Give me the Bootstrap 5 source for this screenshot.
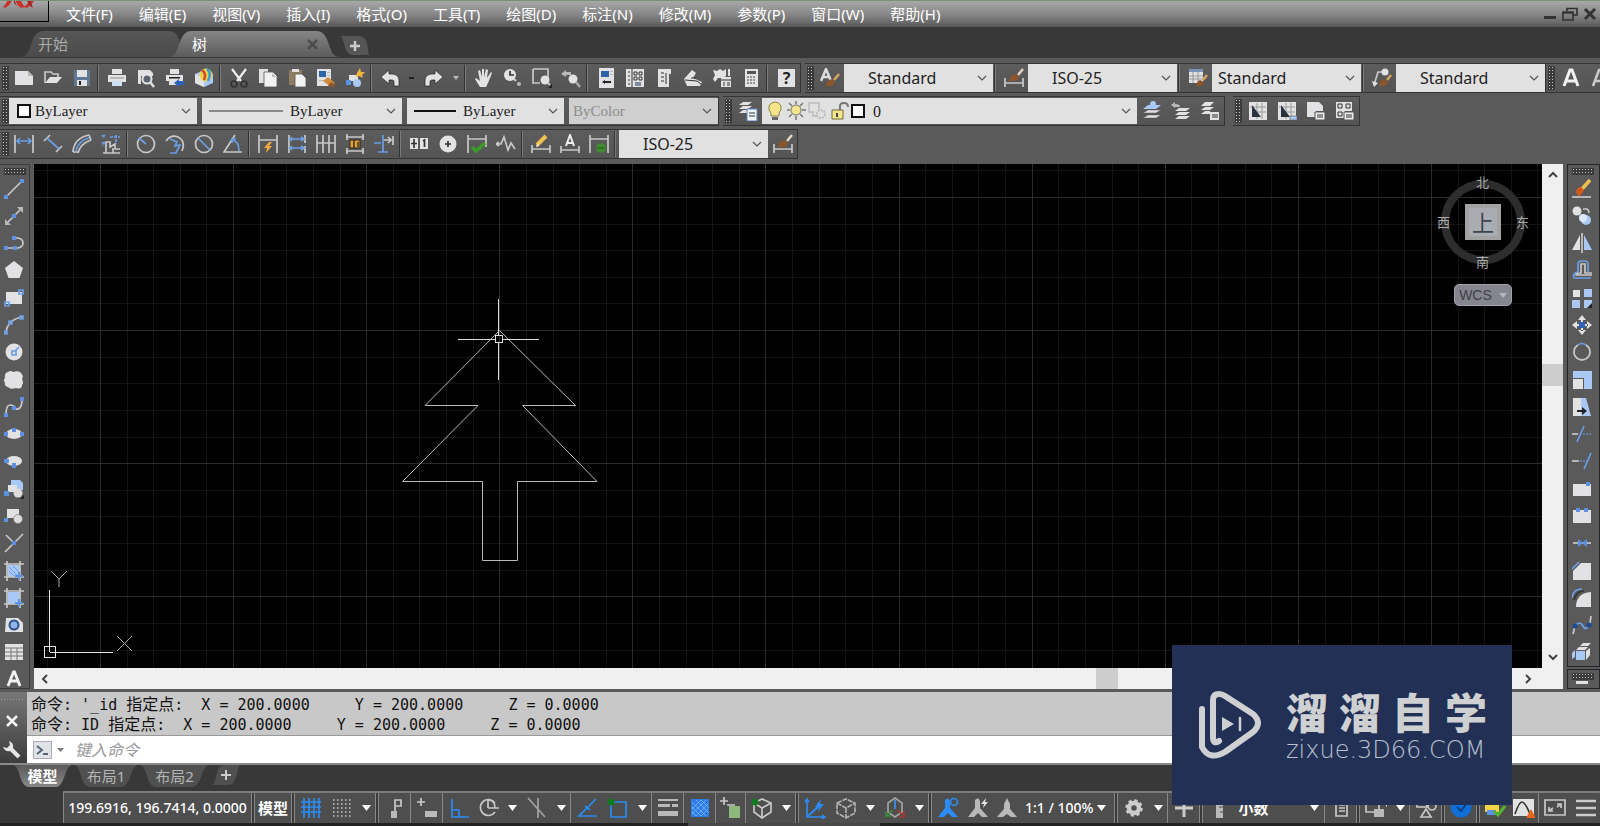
<!DOCTYPE html>
<html lang="zh-CN">
<head>
<meta charset="utf-8">
<meta name="viewport" content="width=device-width, initial-scale=1">
<title>树</title>
<link href="https://cdn.jsdelivr.net/npm/bootstrap@5.3.0/dist/css/bootstrap.min.css" rel="stylesheet">
<style>
:root{--ui:"Noto Sans","Noto Sans CJK SC",sans-serif}
body{font-family:var(--ui);font-size:15px;line-height:20px;background:#5a5a5a;color:#eee}
button{border:0;background:none;padding:0;color:inherit;display:flex;align-items:center;justify-content:center;flex:none}
svg{display:block;flex:none}
/* svg paint helpers */
.w{fill:#e2e2e4}.g{fill:#b9b9b9}.k{fill:#222}.f{fill:#a9c8f3}.u{fill:#5b93e2}.o{fill:#eaa02c}.r{fill:#8d5529}
.l,.b,.d,.n{fill:none;stroke:#c8c8c8;stroke-width:1.7}.b{stroke:#6a9fe8}.d{stroke:#333}.n{stroke:#2b8cf5}
.t{stroke-width:1}
.menubar{height:27px;border-top:1px solid #7b8f7b;background:linear-gradient(#a8a8a8,#888 50%,#585858)}
.logo-box{width:49px;height:21px;border-right:1px solid #000;border-bottom:1px solid #000;background:linear-gradient(#a8a8a8,#707070);align-self:flex-start;overflow:hidden}
.menus{gap:26px;padding-left:17px}
.menus a{color:#fff;text-decoration:none;white-space:nowrap}
.win button{width:20px;height:20px}
.filebar{height:31px;background:#383838;padding:4px 0 1px 20px}
.filetab{height:26px;width:162px;padding:0 18px;background:linear-gradient(#565656,#4b4b4b);color:#aaa;clip-path:path("M0 26C14 26 8 0 24 0H148C160 0 160 12 162 26Z")}
.filetab.on{width:172px;margin-left:-14px;padding:0 22px 0 24px;background:linear-gradient(#858585,#5c5c5c);color:#fff;clip-path:path("M0 26C14 26 8 0 24 0H148C164 0 158 26 172 26Z")}
.newtab{width:28px;height:19px;margin:5px 0 0 1px;background:#565656;clip-path:path("M0 0H16C27 0 26 8 28 19H13C3 19 5 9 0 0Z")}
.bars{padding:5px 0;gap:3px}
.bar{height:30px;border:1px solid #343434;border-left:0;background:linear-gradient(#5d5d5d,#545454);flex:none}
.grip{width:7px;height:24px;margin:0 1px 0 2px;background:radial-gradient(circle,#c8c8c8 0 1px,transparent 1px) 0 0/3px 3px,#3a3a3a;flex:none}
.tb{width:29px;height:28px}
.tb svg,.side svg{width:20px;height:20px}
.sep{width:6px;height:26px;border-left:1px solid #333;box-shadow:inset 1px 0 #7c7c7c;margin-left:1px;margin-right:-1px;flex:none}
.dd{width:15px;height:28px}
select{appearance:none;border:0;border-radius:0;color:#222;font-size:16px;height:28px;outline:0;background:#e1e1e1 url("data:image/svg+xml,%3Csvg xmlns='http://www.w3.org/2000/svg' width='10' height='6'%3E%3Cpath d='M1 1l4 4 4-4' fill='none' stroke='%23555' stroke-width='1.2'/%3E%3C/svg%3E") no-repeat right 6px center}
.std{width:149px;padding:0 24px}
.std.near{padding-left:6px}
.prop{display:flex;align-items:center;height:26px;background:#e1e1e1;margin-right:5px}
.prop select{height:26px;flex:1 1 0;min-width:0;font:15px "Liberation Serif",serif;padding:0 4px}
.prop select:disabled{color:#8c8c8c;background-color:#cfcfcf;opacity:1}
.prop .swatch0{margin-left:-7px}
.side{width:30px;border:1px solid #3a3a3a;border-left:0;background:#5a5a5a;padding-top:3px}
.side .grip{width:22px;height:7px;margin:0 0 0 4px}
.sidegrid{display:grid;grid-auto-rows:1fr;flex:1 1 0;justify-items:start}
.sidegrid button,.side>button{width:27px}
.side .last{height:22px}
.side.right{width:33px}
.side.mini{height:20px;margin-top:2px}
.side.mini svg{width:12px;height:5px}
.drawing{background:#000;overflow:hidden;flex:1 1 0;min-width:0}
.drawing svg.sheet{position:absolute;left:0;top:0;width:100%;height:100%}
.ucs{position:absolute;left:8px;bottom:6px}
.cube{position:absolute;right:13px;top:8px;width:92px;color:#aaa;font-size:13px}
.ring{width:84px;height:84px;border:8px solid #2d2d2d;border-radius:50%;margin:8px auto 0;display:flex;align-items:center;justify-content:center}
.face{width:36px;height:36px;background:#a9acb2;color:#3c4450;font-size:22px;border:4px solid #a2a2a2}
.dir{position:absolute}
.wcs{width:58px;height:22px;border-radius:5px;background:#85858f;color:#3f3f45;border:1px solid #a0a0a8;font:14px "Liberation Sans",sans-serif;margin:20px 0 0 17px;gap:7px}
.track{background:#f0f0f0}
.track button{width:21px;height:21px}
.thumb{background:#cdcdcd}
.v-track .thumb{height:22px}
.h-track .thumb{width:22px}
.cmd{border-top:3px solid #5a5a5a}
.cmdside{width:27px;background:linear-gradient(#777,#3d3d3d);gap:14px;padding:6px 3px 0 0}
.hist{background:#c8c8c8;color:#111;font:15px/19px "DejaVu Sans Mono","Noto Sans CJK SC",monospace;height:44px;padding:3px 4px;margin:0;border-bottom:1px solid #999;overflow:hidden}
.hist span{font-size:16px}
.entry{height:27px;background:#fff;padding-left:6px}
.entry input{border:0;outline:0;font:italic 16px var(--ui);flex:1;min-width:0;padding:0 0 0 11px;color:#333}
.entry input::placeholder{color:#9a9a9a}
.layouts{height:28px;background:#383838;border-top:2px solid #8a8a8a;padding-left:14px}
.lay{height:22px;width:62px;margin-right:4px;background:#505050;color:#b4b4b4;clip-path:path("M0 0H62C55 4 56 21 46 22H15C5 21 7 4 0 0Z")}
.lay.on{width:57px;background:linear-gradient(#5a5a5a,#888);color:#fff;font-weight:700;clip-path:path("M0 0H57C50 4 51 21 42 22H15C5 21 7 4 0 0Z")}
.lay.wide{width:67px;clip-path:path("M0 0H67C60 4 61 21 51 22H15C5 21 7 4 0 0Z")}
.lay.add{width:28px;height:20px;clip-path:path("M0 20C6 18 2 0 13 0H28C24 4 26 19 17 20Z")}
.status{height:32px;background:#383838;padding-left:63px;color:#fff}
.strip{background:#4e4e4e;border-top:2px solid #7c7c7c;height:32px;min-width:0;overflow:hidden}
.strip button{width:31px;height:30px}
.strip button.near{width:29px}
.strip button.model{width:36px}
.strip button.ar{width:18px}
.strip svg{width:22px;height:22px}
.strip .ar svg,.strip .txt svg{width:9px;height:6px}
.strip .v{width:1px;height:30px;background:#888;flex:none}
.strip .vv{width:4px;height:30px;border:solid #888;border-width:0 1px;background:#3a3a3a;flex:none}
.coords{width:188px;flex:none;border-left:1px solid #888;font-size:14px;font-weight:500;white-space:nowrap}
.strip button.txt{width:auto;font-size:14px;font-weight:500;white-space:nowrap}
.units select{width:90px;height:30px;color:#fff;font-size:15px;font-weight:700;padding:0 4px;background:transparent url("data:image/svg+xml,%3Csvg xmlns='http://www.w3.org/2000/svg' width='9' height='6'%3E%3Cpath d='M0 0h9l-4.500 6z' fill='%23fff'/%3E%3C/svg%3E") no-repeat right 5px center}
.floor{height:3px;background:linear-gradient(90deg,#222 0 43%,#484848 43% 55%,#222 55%)}
.brand{position:absolute;right:88px;bottom:21px;width:340px;height:160px;background:#223055;color:#cfd0d2;padding-left:25px;gap:23px}
.brand .cn{font:900 42px/46px "Noto Sans CJK SC",sans-serif;gap:11px}
.brand .en{font:200 24px/26px "DejaVu Sans Light","DejaVu Sans",sans-serif;color:#b9c0cf;margin-top:3px}
</style>
<script src="https://cdn.jsdelivr.net/npm/bootstrap@5.3.0/dist/js/bootstrap.bundle.min.js"></script>
</head>
<body class="vh-100 overflow-hidden position-relative d-flex flex-column">

<header class="menubar d-flex align-items-center">
  <div class="logo-box"><svg width="48" height="20" viewBox="0 0 48 20"><path d="M3 6Q7 3 8-3H13Q11 4 5 7M17-3H21Q21 3 25 6L21 7Q17 4 15-1M24 6Q29 3 30-3H35Q33 4 27 7M36-3" fill="#c8302c"/><path d="M14-2Q17 6 19 7L14 2M26-3Q29 5 33 7L30 0" fill="#9c2220"/></svg></div>
  <nav class="menus d-flex me-auto">
    <a href="#">文件(F)</a><a href="#">编辑(E)</a><a href="#">视图(V)</a><a href="#">插入(I)</a><a href="#">格式(O)</a><a href="#">工具(T)</a><a href="#">绘图(D)</a><a href="#">标注(N)</a><a href="#">修改(M)</a><a href="#">参数(P)</a><a href="#">窗口(W)</a><a href="#">帮助(H)</a>
  </nav>
  <div class="win d-flex">
    <button aria-label="最小化"><svg width="14" height="14"><path d="M1 9h12v3H1z" fill="#333"/></svg></button>
    <button aria-label="还原"><svg width="16" height="14"><path class="d" d="M5 4V1.500H15V8H11M1 5h10v8H1zM1 6h10"/></svg></button>
    <button aria-label="关闭"><svg width="14" height="14"><path d="M2 2l10 10M12 2L2 12" stroke="#333" stroke-width="3"/></svg></button>
  </div>
</header>

<div class="filebar d-flex">
  <div class="filetab d-flex align-items-center">开始</div>
  <div class="filetab on d-flex align-items-center justify-content-between">树<button aria-label="关闭"><svg width="11" height="11"><path d="M1 1l9 9M10 1l-9 9" stroke="#4c4c4c" stroke-width="2.500"/></svg></button></div>
  <button class="newtab" aria-label="新建"><svg width="12" height="12"><path d="M6 1v10M1 6h10" stroke="#ccc" stroke-width="2.500"/></svg></button>
</div>

<div class="bars d-flex flex-column">
  <!-- standard + styles -->
  <div class="d-flex overflow-hidden">
    <div class="bar d-flex align-items-center">
      <div class="grip me-0"></div>
      <button class="tb" aria-label="新建"><svg viewBox="0 0 20 20"><path class="w" d="M1 3h13l5 5v9H1z"/><path class="g" d="M14 3v5h5z"/></svg></button>
      <button class="tb" aria-label="打开"><svg viewBox="0 0 20 20"><path class="l" d="M2 15V4h6l2 2h5v3"/><path class="w" d="M2 15L7 9h12l-5 6z"/></svg></button>
      <button class="tb" aria-label="保存"><svg viewBox="0 0 20 20"><path fill="#5f7894" d="M2 2h16v16H2z"/><path class="w" d="M5 2h10v7H5zM5 12h10v6H5z"/><path class="k" d="M7 13h2v4H7z"/></svg></button>
      <div class="sep"></div>
      <button class="tb" aria-label="打印"><svg viewBox="0 0 20 20"><path class="w" d="M5 1h10v5H5zM1 7h18v7H1z"/><path class="g" d="M3 9h14v2H3z"/><path fill="#cfe0f5" d="M5 13h10v5H5z"/></svg></button>
      <button class="tb" aria-label="打印预览"><svg viewBox="0 0 20 20"><path class="w" d="M2 2h12l3 3v3H5v8H2z"/><circle cx="11" cy="11" r="4.500" fill="#5b6470" stroke="#e5e5e5" stroke-width="2"/><path d="M14 14l4 5" stroke="#ddd" stroke-width="2.500"/></svg></button>
      <button class="tb" aria-label="发布"><svg viewBox="0 0 20 20"><path class="w" d="M5 1h9v5H5zM1 7h17v6H1zM4 13h8v4H4z"/><path class="k" d="M4 9h11v1.500H4z"/><path fill="#2b62b8" d="M9 15l5-4v2h5v4h-5v2z"/></svg></button>
      <button class="tb" aria-label="三维打印"><svg viewBox="0 0 20 20"><path class="f" d="M1 6l9-4 9 4v9l-9 4-9-4z"/><path class="w" d="M1 6l9 4v9l-9-4z"/><circle cx="12" cy="7" r="6.500" fill="#e8d44a"/><path d="M8 2q5 4 2 10" stroke="#d6442c" stroke-width="2.500" fill="none"/><path d="M13 1q5 4 1 12" stroke="#3b9bd8" stroke-width="2.500" fill="none"/></svg></button>
      <div class="sep"></div>
      <button class="tb" aria-label="剪切"><svg viewBox="0 0 20 20"><path d="M3 1l9 12M17 1L8 13" stroke="#eee" stroke-width="2.200"/><circle cx="5" cy="16" r="3" class="d" stroke-width="2.500"/><circle cx="15" cy="16" r="3" class="d" stroke-width="2.500"/></svg></button>
      <button class="tb" aria-label="复制"><svg viewBox="0 0 20 20"><path class="w" d="M1 1h9v14H1z"/><path d="M6 4h9l4 4v11H6z" fill="#f2f2f2" stroke="#555" stroke-width=".8"/><path class="g" d="M14 5v4h4z"/></svg></button>
      <button class="tb" aria-label="粘贴"><svg viewBox="0 0 20 20"><path fill="#8f7d62" d="M2 2h13v15H2z"/><path class="w" d="M5 1h7v3H5z"/><path d="M8 6h7l4 4v9H8z" fill="#f2f2f2" stroke="#555" stroke-width=".8"/></svg></button>
      <button class="tb" aria-label="特性匹配"><svg viewBox="0 0 20 20"><path class="w" d="M1 1h14v17H1z"/><path fill="#2c64ac" d="M3 3h7v6H3z"/><path class="g" d="M11 4h3v1h-3zM11 7h3v1h-3zM3 12h7v1H3z"/><path fill="#d28a3a" d="M7 13l5-4 7 6-4 4z"/><path class="r" d="M12 17l4-3 3 5h-5z"/></svg></button>
      <button class="tb" aria-label="块编辑器"><svg viewBox="0 0 20 20"><path class="w" d="M4 7h9v6H4z"/><path class="u" d="M1 12h5v5H1z"/><circle cx="12" cy="15" r="4" class="f"/><path d="M15 0l1 4 4 0-3 3 1 3-4-2-3 1 1-4z" fill="#f4b43c"/></svg></button>
      <div class="sep"></div>
      <button class="tb" aria-label="放弃"><svg viewBox="0 0 20 20"><path class="w" d="M1 9l8-7v4h4q6 1 6 6v6h-5v-4q0-2-2-2H9v4z" stroke="#222" stroke-width=".7"/></svg></button>
      <button class="dd" aria-label="放弃列表"><svg width="5" height="3"><path class="k" d="M0 0h5v2H0z"/></svg></button>
      <button class="tb" aria-label="重做"><svg viewBox="0 0 20 20"><path class="w" d="M19 9l-8-7v4H7q-6 1-6 6v6h5v-4q0-2 2-2h3v4z" stroke="#222" stroke-width=".7"/></svg></button>
      <button class="dd" aria-label="重做列表"><svg width="6" height="4"><path class="g" d="M0 0h6l-3 4z"/></svg></button>
      <div class="sep"></div>
      <button class="tb" aria-label="平移"><svg viewBox="0 0 20 20"><path class="w" d="M6 19L1 11l1-1 4 3L4 3l2-1 2 7V1h2v8l2-8 2 1-1 8 4-6 1 1-4 10-2 4z"/></svg></button>
      <button class="tb" aria-label="实时缩放"><svg viewBox="0 0 20 20"><circle cx="7" cy="7" r="6" class="w"/><path class="d" d="M7 3v4h4"/><path d="M11 11l3 3" stroke="#ccc" stroke-width="2"/><path d="M13 13l5 5" stroke="#555" stroke-width="3"/><circle cx="16" cy="16" r="2" class="g"/></svg></button>
      <button class="tb" aria-label="窗口缩放"><svg viewBox="0 0 20 20"><path class="l" d="M1 1h15v9M8 15H1V1"/><circle cx="13" cy="12" r="4.500" class="w"/><path d="M16 15l2 2" stroke="#ccc" stroke-width="2"/><path class="k" d="M20 16v4h-4z"/></svg></button>
      <button class="tb" aria-label="缩放上一个"><svg viewBox="0 0 20 20"><path class="g" d="M0 6l5-4v2h5v3H5v2z"/><circle cx="12" cy="11" r="4.500" class="w"/><path d="M15 14l4 5" stroke="#aaa" stroke-width="2.500"/></svg></button>
      <div class="sep"></div>
      <button class="tb" aria-label="特性"><svg viewBox="0 0 20 20"><path class="w" d="M3 0h15v20H3z"/><path fill="#2c64ac" d="M5 3h8v6H5z"/><path class="k" d="M6 14l3-2v1h6v2H9v1z"/><path class="g" d="M14 3h3v1h-3zM14 6h3v1h-3z"/></svg></button>
      <button class="tb" aria-label="设计中心"><svg viewBox="0 0 20 20"><path class="w" d="M1 1h18v18H1z"/><path d="M7 1v18M3 4h2M3 8h2M3 12h2M3 16h2" class="d t"/><path d="M9 4h3v3H9zM14 4h3v3h-3zM9 9h3v3H9zM14 9h3v3h-3z" class="d t"/><path fill="#7d8ca5" d="M10 14h6v4h-6z"/></svg></button>
      <button class="tb" aria-label="工具选项板"><svg viewBox="0 0 20 20"><path class="w" d="M4 1h13v5h-2v13H4z"/><path d="M7 5h3M7 9h3M7 13h3M12 5v11" class="d t"/></svg></button>
      <button class="tb" aria-label="图纸集"><svg viewBox="0 0 20 20"><path class="w" d="M1 11l8-9 4 3-3 5 9 4-2 4H4z"/><path d="M2 12l12 1 4 3M8 10l5 0" class="d t"/></svg></button>
      <button class="tb" aria-label="标记集"><svg viewBox="0 0 20 20"><path class="w" d="M1 2l4 1 3-2 3 2 3-2v7l-3 2H6l-3 4-2-3 2-4z"/><path class="w" d="M16 1h2v7h-2zM9 9h10v10H9z"/><path d="M9 12h10M11 15h2M15 15h3M11 17h2M15 17h3" class="d t"/></svg></button>
      <button class="tb" aria-label="计算器"><svg viewBox="0 0 20 20"><path class="w" d="M4 1h13v18H4z"/><path fill="#555" d="M6 3h9v3H6z"/><path d="M6 9h9M6 12h9M6 15h9" stroke="#777" stroke-width="1.500" stroke-dasharray="2 1"/></svg></button>
      <div class="sep"></div>
      <button class="tb" aria-label="帮助"><svg viewBox="0 0 20 20"><path class="w" d="M2 1h17v18H2z"/><text x="10.500" y="16" text-anchor="middle" font-size="16" font-weight="700" fill="#222">?</text></svg></button>
    </div>
    <div class="bar d-flex align-items-center ms-1">
      <div class="grip"></div>
      <button class="tb" aria-label="文字样式"><svg viewBox="0 0 20 20"><path d="M1 13L6 1l5 12M3 9h6" fill="none" stroke="#ddd" stroke-width="2.500"/><path d="M19 6l-5 6" stroke="#d9a45b" stroke-width="2.500"/><path class="r" d="M6 18q1-5 5-7l4 3q-1 5-9 4z"/></svg></button>
      <select class="std" aria-label="文字样式"><option>Standard</option></select>
      <div class="sep"></div>
      <button class="tb" aria-label="标注样式"><svg viewBox="0 0 20 20"><path class="l" d="M1 10v9M19 10v9M1 15h18"/><path d="M19 1l-5 6" stroke="#e3d6c5" stroke-width="2.500"/><path class="r" d="M5 13q1-5 6-7l4 3q-1 5-10 4z"/></svg></button>
      <select class="std" aria-label="标注样式"><option>ISO-25</option></select>
      <div class="sep"></div>
      <button class="tb" aria-label="表格样式"><svg viewBox="0 0 20 20"><path class="w" d="M1 2h14v13H1z"/><path fill="#7b95b5" d="M1 1h14v3H1z"/><path d="M1 8h14M1 11h14M5 4v11M10 4v11" stroke="#888" stroke-width=".8"/><path d="M19 7l-4 5" stroke="#d9a45b" stroke-width="2.500"/><path class="r" d="M8 18q1-5 4-6l4 2q-1 5-8 4z"/></svg></button>
      <select class="std near" aria-label="表格样式"><option>Standard</option></select>
      <div class="sep"></div>
      <button class="tb" aria-label="多重引线样式"><svg viewBox="0 0 20 20"><path class="l" d="M2 17L6 4h5"/><path class="w" d="M0 13l2 6 4-4z"/><circle cx="13" cy="4" r="3.500" class="w"/><path d="M19 7l-4 5" stroke="#d9a45b" stroke-width="2.500"/><path class="r" d="M7 18q1-6 5-7l4 3q-1 5-9 4z"/></svg></button>
      <select class="std" aria-label="多重引线样式"><option>Standard</option></select>
    </div>
    <div class="bar d-flex align-items-center">
      <div class="grip"></div>
      <button class="tb" aria-label="多行文字"><svg viewBox="0 0 20 20"><path d="M3 18L9 2h2l6 16M6 13h8" fill="none" stroke="#f2f2f2" stroke-width="3"/></svg></button>
      <button class="tb" aria-label="单行文字"><svg viewBox="0 0 20 20"><path d="M3 18L9 2h2l6 16M6 13h8" fill="none" stroke="#ccc" stroke-width="2.500"/></svg></button>
    </div>
  </div>

  <!-- properties + layers -->
  <div class="d-flex">
    <div class="bar d-flex align-items-center">
      <div class="grip me-0"></div>
      <div class="prop" style="width:188px"><svg class="ms-2" width="14" height="14"><path d="M1 1h12v12H1z" fill="#fff" stroke="#111" stroke-width="2"/></svg><select aria-label="颜色"><option>ByLayer</option></select></div>
      <div class="prop" style="width:200px"><svg class="ms-1" width="80" height="4"><path d="M3 2h74" stroke="#333"/></svg><select aria-label="线型"><option>ByLayer</option></select></div>
      <div class="prop" style="width:157px"><svg class="ms-1" width="48" height="4"><path d="M3 2h42" stroke="#111" stroke-width="2"/></svg><select aria-label="线宽"><option>ByLayer</option></select></div>
      <div class="prop me-0" style="width:149px"><select class="std" aria-label="打印样式" disabled><option>ByColor</option></select></div>
    </div>
    <div class="bar d-flex align-items-center ms-1">
      <div class="grip"></div>
      <button class="tb" aria-label="图层特性"><svg viewBox="0 0 20 20"><path class="w" d="M1 4l4-3h9l-4 3zM1 8l4-3h9l-4 3zM1 12l4-3h5v3z"/><path d="M9 8h10v12H9z" fill="#eef3fb" stroke="#5b87c5"/><path d="M11 12h6M11 15h6" class="d t"/></svg></button>
      <div class="prop me-0" style="width:375px">
        <svg class="ms-1" width="92" height="20" viewBox="0 0 92 20"><path d="M5 12Q2 9 3 5Q5 1 9 1t6 4q1 4-2 7v3H5z" fill="#f4e48a" stroke="#8a8148"/><path d="M6 16h6v3H6z" fill="#666"/><circle cx="30" cy="9" r="5" fill="#f4e48a" stroke="#777"/><path d="M30 0v3M30 15v4M21 9h3M36 9h4M23 2l3 3M37 2l-3 3M23 16l3-3M37 16l-3-3" stroke="#777" stroke-width="1.500"/><path d="M51 15h-4V11h-4V2h10v6" fill="none" stroke="#bbb" stroke-width="1.500"/><circle cx="55" cy="13" r="4" fill="none" stroke="#bbb" stroke-width="2" stroke-dasharray="2 1"/><path d="M66 9h11v9H66z" fill="#f4e48a" stroke="#6f6835"/><path d="M74 9V5q0-3 4-3t4 4" fill="none" stroke="#777" stroke-width="2"/><path d="M70 12h2v4h-2z" fill="#444"/></svg>
        <svg class="swatch0" width="14" height="14"><path d="M1 1h12v12H1z" fill="#fff" stroke="#111" stroke-width="2"/></svg>
        <select class="fs-6 ps-2" aria-label="图层"><option>0</option></select>
      </div>
      <button class="tb" aria-label="置为当前"><svg viewBox="0 0 20 20"><path class="w" d="M1 12l5-3h13l-5 3zM1 17l5-3h13l-5 3z" stroke="#555" stroke-width=".5"/><path class="f" d="M1 8l5-4h13l-5 4z"/><circle cx="11" cy="3" r="3" class="f"/></svg></button>
      <button class="tb" aria-label="上一个图层"><svg viewBox="0 0 20 20"><path class="g" d="M0 4l4-3v2q5 0 5 3H4v1z"/><path class="w" d="M4 10l4-3h11l-4 3zM4 14l4-3h11l-4 3zM4 18l4-3h11l-4 3z"/></svg></button>
      <button class="tb" aria-label="图层状态"><svg viewBox="0 0 20 20"><path class="w" d="M1 5l4-4h9l-4 4zM1 9l4-3h9l-4 3zM1 13l4-3h5v3zM10 11h9v8h-9z"/><path d="M12 14h6M12 16h6" class="d t"/></svg></button>
    </div>
    <div class="bar d-flex align-items-center ms-2">
      <div class="grip"></div>
      <button class="tb" aria-label="创建块"><svg viewBox="0 0 20 20"><path class="w" d="M1 1h18v18H1z"/><path d="M9 2v16M14 2v16M2 6h16M9 11h9" stroke="#9a9a9a"/><path d="M4 4l9 12H4z" fill="#2a323e"/></svg></button>
      <button class="tb" aria-label="编辑块"><svg viewBox="0 0 20 20"><path class="w" d="M1 1h18v18H1z"/><path d="M9 2v16M14 2v16M2 6h16M9 11h9" stroke="#9a9a9a"/><path d="M4 4l9 12H4z" fill="#2a323e"/><path d="M13 15h7v4h-7z" class="f" stroke="#555" stroke-width=".6"/></svg></button>
      <button class="tb" aria-label="外部参照"><svg viewBox="0 0 20 20"><path class="w" d="M1 1h12l4 4v5h-7v6H1z"/><path d="M9 11h10v8H9z" fill="#eee" stroke="#555"/><path d="M11 14h6M11 16h6" class="d t"/></svg></button>
      <button class="tb" aria-label="块属性"><svg viewBox="0 0 20 20"><path class="w" d="M1 1h16v9h-7v7H1z"/><path d="M3 3h4v4H3zM11 3h4v4h-4zM3 11h4v4H3z" class="d t"/><path d="M9 11h10v8H9z" fill="#eee" stroke="#555"/><path d="M11 14h6M11 16h6" class="d t"/></svg></button>
    </div>
  </div>

  <!-- dimension -->
  <div class="d-flex">
    <div class="bar d-flex align-items-center">
      <div class="grip me-0"></div>
      <button class="tb" aria-label="线性"><svg viewBox="0 0 20 20"><path class="l" d="M1 1v18M19 1v18"/><path class="b" d="M3 7h14M6 4L3 7l3 3M14 4l3 3-3 3"/></svg></button>
      <button class="tb" aria-label="对齐"><svg viewBox="0 0 20 20"><path class="l" d="M1 7l6-6M13 18l6-6"/><path class="b" d="M4 4l12 11" stroke-width="2.500"/></svg></button>
      <button class="tb" aria-label="弧长"><svg viewBox="0 0 20 20"><path class="l" d="M1 18Q2 4 17 1M6 19Q8 10 19 6M1 18h5M17 1l2 5"/><path class="b" d="M4 17Q6 7 17 4"/></svg></button>
      <button class="tb" aria-label="坐标"><svg viewBox="0 0 20 20"><path class="l" d="M5 19V8h4v5l5-3v5h5M2 19h17M12 14v5"/><path class="b" d="M1 1l3 3M4 1L1 4M9 3h10M15 1v9M1 8l3 3M4 8l-3 4" stroke-dasharray="3 1"/></svg></button>
      <div class="sep"></div>
      <button class="tb" aria-label="半径"><svg viewBox="0 0 20 20"><circle class="l" cx="10" cy="10" r="8.500"/><path class="b" d="M3 4l7 6"/></svg></button>
      <button class="tb" aria-label="折弯"><svg viewBox="0 0 20 20"><path class="l" d="M1 7Q6 0 13 3Q21 7 17 17"/><path class="b" d="M5 5l7 3-2 4 5-1-4 8H5"/></svg></button>
      <button class="tb" aria-label="直径"><svg viewBox="0 0 20 20"><circle class="l" cx="10" cy="10" r="8.500"/><path class="b" d="M4 4l12 12"/></svg></button>
      <button class="tb" aria-label="角度"><svg viewBox="0 0 20 20"><path class="l" d="M12 1L1 18h18"/><path class="b" d="M9 6q7 1 7 11M9 9V5h4"/></svg></button>
      <div class="sep"></div>
      <button class="tb" aria-label="快速标注"><svg viewBox="0 0 20 20"><path class="l" d="M1 1v18M19 1v18M1 6h18"/><path d="M11 8l-5 6h3l-1 5 6-7h-3l3-4z" fill="#f0a93c"/></svg></button>
      <button class="tb" aria-label="基线"><svg viewBox="0 0 20 20"><path class="l" d="M2 1v18M18 1v8M18 12v7"/><path class="b" d="M2 5h15M2 14h15M5 3L3 5l2 2M14 3l3 2-3 2M5 12l-2 2 2 2M14 12l3 2-3 2"/></svg></button>
      <button class="tb" aria-label="连续"><svg viewBox="0 0 20 20"><path class="l" d="M1 1v18M7 1v18M13 1v18M19 1v18M1 9h18"/></svg></button>
      <button class="tb" aria-label="等距标注"><svg viewBox="0 0 20 20"><path class="l" d="M1 3h18M1 17h18M2 0v6M18 0v6M2 14v6M18 14v6"/><path d="M5 6h10v8H5z" fill="#eaa02c" stroke="#222"/><path d="M9 6v8M13 8v5" stroke="#333" stroke-width="1.500"/></svg></button>
      <button class="tb" aria-label="折断标注"><svg viewBox="0 0 20 20"><path class="l" d="M10 6h9M19 2v9M14 3l3 3-3 3"/><path class="b" d="M9 1v17M4 18h10M0 9h7"/></svg></button>
      <div class="sep"></div>
      <button class="tb" aria-label="公差"><svg viewBox="0 0 20 20"><path class="w" d="M1 4h8v11H1zM11 4h8v11h-8z"/><path class="d" d="M5 5v9M2 9.500h6M14 7l1.500-1V13"/></svg></button>
      <button class="tb" aria-label="圆心标记"><svg viewBox="0 0 20 20"><circle cx="10" cy="10" r="8.500" class="w"/><path class="d" d="M10 7v6M7 10h6"/></svg></button>
      <button class="tb" aria-label="检验"><svg viewBox="0 0 20 20"><path class="l" d="M1 1v18M19 1v12M1 5h18"/><path d="M5 13l4 4 9-8" fill="none" stroke="#3c9a28" stroke-width="3.500"/></svg></button>
      <button class="tb" aria-label="折弯线性"><svg viewBox="0 0 20 20"><path class="l" d="M0 10h5l3-7 4 13 3-7 4 6M0 10l3-2M0 10l3 2"/></svg></button>
      <div class="sep"></div>
      <button class="tb" aria-label="编辑标注"><svg viewBox="0 0 20 20"><path class="l" d="M1 11v8M19 11v8M1 15h18"/><path d="M6 11l9-9" stroke="#f2c153" stroke-width="4"/><path d="M5 13l3-1-2-2z" fill="#fff"/></svg></button>
      <button class="tb" aria-label="编辑标注文字"><svg viewBox="0 0 20 20"><path class="l" d="M1 12v7M19 12v7M1 16h18"/><path d="M6 12l4-11 4 11M7 9h6" fill="none" stroke="#eee" stroke-width="2"/></svg></button>
      <button class="tb" aria-label="标注更新"><svg viewBox="0 0 20 20"><path class="l" d="M1 1v18M19 1v18M1 5h18"/><circle cx="12" cy="14" r="5" fill="#3f8a2c"/><path d="M8 14h8" stroke="#2b5d20"/></svg></button>
      <div class="sep"></div>
      <select class="std" aria-label="当前标注样式"><option>ISO-25</option></select>
      <button class="tb" aria-label="标注样式"><svg viewBox="0 0 20 20"><path class="l" d="M1 10v9M19 10v9M1 15h18"/><path d="M19 1l-5 6" stroke="#e3d6c5" stroke-width="2.500"/><path class="r" d="M5 13q1-5 6-7l4 3q-1 5-10 4z"/></svg></button>
    </div>
  </div>
</div>

<main class="d-flex flex-grow-1" style="min-height:0">
  <!-- draw tools -->
  <div class="side d-flex flex-column me-1 overflow-hidden">
    <div class="grip"></div>
    <div class="sidegrid">
      <button aria-label="直线"><svg viewBox="0 0 20 20"><path class="l" d="M2 18L18 2" stroke-width="2.200"/><path class="u" d="M0 16h4v4H0zM16 0h4v4h-4z"/></svg></button>
      <button aria-label="构造线"><svg viewBox="0 0 20 20"><path class="l" d="M2 18L18 2"/><path class="g" d="M1 13v6h6zM13 1h6v6z"/><path class="u" d="M8 8h4v4H8z"/></svg></button>
      <button aria-label="多段线"><svg viewBox="0 0 20 20"><path class="l" d="M2 15h12q5-1 5-5t-5-5h-3" stroke-width="2.500"/><path class="u" d="M0 13h4v4H0zM9 13h4v4H9zM8 3h4v4H8z"/></svg></button>
      <button aria-label="多边形"><svg viewBox="0 0 20 20"><path class="w" d="M10 1l9 7-3.500 10h-11L1 8z"/></svg></button>
      <button aria-label="矩形"><svg viewBox="0 0 20 20"><path class="w" d="M2 4h16v12H2z"/><path class="b" d="M1 14h4v4H1zM15 2h4v4h-4z"/></svg></button>
      <button aria-label="圆弧"><svg viewBox="0 0 20 20"><path class="l" d="M2 18Q3 5 18 2" stroke-width="2.200"/><path class="b" d="M0 16h3v3H0zM5 6h3v3H5zM16 1h3v3h-3z"/></svg></button>
      <button aria-label="圆"><svg viewBox="0 0 20 20"><circle cx="10" cy="10" r="8.500" class="w"/><path class="b" d="M8 9h4v4H8zM11 9l4-4"/></svg></button>
      <button aria-label="修订云线"><svg viewBox="0 0 20 20"><path class="w" d="M4 2q3-2 5 0 6-2 8 1 3 3 1 6 2 4 0 6 0 5-6 3-6 2-8-1-4-1-3-4-2-3 0-5-1-5 3-6z"/></svg></button>
      <button aria-label="样条曲线"><svg viewBox="0 0 20 20"><path class="l" d="M2 18Q2 8 6 8t6 4q6 1 6-10" stroke-width="2.200"/><path class="u" d="M0 16h4v4H0zM8 9h4v4H8zM16 0h4v4h-4z"/></svg></button>
      <button aria-label="椭圆"><svg viewBox="0 0 20 20"><ellipse cx="10" cy="10" rx="8" ry="5" class="w"/><path class="u" d="M0 8h4v4H0zM16 8h4v4h-4zM8 4h4v4H8z"/></svg></button>
      <button aria-label="椭圆弧"><svg viewBox="0 0 20 20"><ellipse cx="10" cy="10" rx="8" ry="5" class="w"/><path class="u" d="M0 8h5v4H0zM8 12h4v5H8z"/></svg></button>
      <button aria-label="插入块"><svg viewBox="0 0 20 20"><path class="f" d="M7 1h9l3 3v7H7z"/><path class="w" d="M4 6h9v7H4z"/><path class="u" d="M0 12h5v5H0z"/><circle cx="14" cy="14" r="4.500" fill="#ddd"/><path class="k" d="M20 16v4h-4z"/></svg></button>
      <button aria-label="创建块"><svg viewBox="0 0 20 20"><path class="w" d="M3 3h12v9H3z"/><path class="u" d="M0 12h4v4H0z"/><circle cx="14" cy="13" r="4.500" fill="#ddd" stroke="#777" stroke-width=".7"/></svg></button>
      <button aria-label="点"><svg viewBox="0 0 20 20"><path class="l" d="M1 19L19 1M2 2l8 8" stroke-width="2"/><path class="u" d="M8 8h4v4H8z"/></svg></button>
      <button aria-label="图案填充"><svg viewBox="0 0 20 20"><path class="f" d="M4 4h12v12H4z"/><path class="l" d="M0 3h20M0 16h20M3 0v20M16 0v20"/><path class="b t" d="M5 6l9 9M9 5l6 6M5 10l5 5"/><path class="u" d="M14 11h2v3h3v2h-3v3h-2v-3h-3v-2h3z"/></svg></button>
      <button aria-label="渐变色"><svg viewBox="0 0 20 20"><path class="f" d="M4 4h12v12H4z"/><path class="l" d="M0 3h20M0 16h20M3 0v20M16 0v20"/><path class="u" d="M14 11h2v3h3v2h-3v3h-2v-3h-3v-2h3z"/></svg></button>
      <button aria-label="面域"><svg viewBox="0 0 20 20"><path class="w" d="M2 3h12l5 5v9H1z"/><circle cx="10" cy="10" r="4.500" fill="#8fb5ea" stroke="#2f5288" stroke-width="2"/></svg></button>
      <button aria-label="表格"><svg viewBox="0 0 20 20"><path class="w" d="M1 2h18v16H1z"/><path d="M1 6h18M1 10h18M1 14h18M7 6v12M13 6v12" stroke="#777"/></svg></button>
    </div>
    <button class="last" aria-label="多行文字"><svg viewBox="0 0 20 20"><path d="M4 19L9.500 5h1L16 19M6 14h8" fill="none" stroke="#f2f2f2" stroke-width="2.800"/></svg></button>
  </div>

  <div class="d-flex flex-column flex-grow-1" style="min-width:0">
    <div class="d-flex flex-grow-1" style="min-height:0">
      <div class="drawing position-relative">
        <svg class="sheet" shape-rendering="crispEdges">
          <g id="grid"></g>
          <g fill="none" stroke="#b8b8b8"><path shape-rendering="auto" d="M465.500 166.500L391 241.500H444L368.500 317.500H448.500V396.500H483.500V317.500H563L488.500 241.500H541.500Z"/>
          <path stroke="#ddd" d="M464.500 135v36M464.500 179v37M424 175.500h37M468 175.500h37M461.500 171.500h7v7h-7z"/></g>
        </svg>
        <svg class="ucs" width="92" height="94" fill="none" stroke="#e8e8e8" shape-rendering="crispEdges"><path d="M2.500 78.500h11v11h-11zM7.500 84V22M7.500 84.500h63"/><path shape-rendering="auto" stroke="#aaa" d="M9 3l8 8 8-8M17 11v8M75 68l15 15M90 68l-15 15"/></svg>
        <div class="cube">
          <div class="ring"><button class="face">上</button></div>
          <span class="dir" style="left:39px;top:0">北</span><span class="dir" style="left:0;top:40px">西</span><span class="dir" style="right:0;top:40px">东</span><span class="dir" style="left:39px;top:80px">南</span>
          <button class="wcs">WCS<svg width="8" height="5"><path d="M0 0h8l-4 5z" fill="#b5b5c0"/></svg></button>
        </div>
      </div>
      <div class="track v-track d-flex flex-column">
        <button aria-label="向上"><svg width="10" height="7"><path d="M1 6l4-4 4 4" fill="none" stroke="#444" stroke-width="2"/></svg></button>
        <div style="flex:180"></div><div class="thumb"></div><div style="flex:262"></div>
        <button aria-label="向下"><svg width="10" height="7"><path d="M1 1l4 4 4-4" fill="none" stroke="#444" stroke-width="2"/></svg></button>
      </div>
    </div>
    <div class="track h-track d-flex">
      <button aria-label="向左"><svg width="7" height="10"><path d="M6 1L2 5l4 4" fill="none" stroke="#444" stroke-width="2"/></svg></button>
      <div style="flex:1042"></div><div class="thumb"></div><div style="flex:400"></div>
      <button class="me-4" aria-label="向右"><svg width="7" height="10"><path d="M1 1l4 4-4 4" fill="none" stroke="#444" stroke-width="2"/></svg></button>
    </div>
  </div>

  <!-- modify tools -->
  <div class="d-flex flex-column ms-1">
    <div class="side right border-start border-dark flex-grow-1 d-flex flex-column">
      <div class="grip"></div>
      <div class="sidegrid">
        <button aria-label="删除"><svg viewBox="0 0 20 20"><path d="M18 1l-8 9" stroke="#f2c153" stroke-width="3.500"/><path d="M4 13q1-5 5-5l3 3q-2 5-6 6z" fill="#d2581c"/><path class="l" d="M0 18h19"/></svg></button>
        <button aria-label="复制"><svg viewBox="0 0 20 20"><circle cx="5" cy="5" r="4.500" class="w"/><circle cx="14" cy="14" r="5" class="f"/><circle cx="11" cy="12" r="4" fill="#dce8fa"/><path class="l" d="M11 3h4q2 1 2 4"/></svg></button>
        <button aria-label="镜像"><svg viewBox="0 0 20 20"><path class="w" d="M8 2v15H0z"/><path class="f" d="M12 2v15h8z"/><path class="l" d="M10 0v20"/></svg></button>
        <button aria-label="偏移"><svg viewBox="0 0 20 20"><path class="b" d="M19 18H2q-2-5 4-6V4q0-3 4-3h3q3 0 3 3v8"/><path class="l" d="M20 15H4q0-2 5-2V4h4v9h7"/></svg></button>
        <button aria-label="阵列"><svg viewBox="0 0 20 20"><path class="w" d="M1 2h7v7H1z"/><path class="f" d="M12 1h8v8h-8zM0 12h8v8H0zM12 12h8v8h-8z"/><path class="k" d="M20 15v5h-5z"/></svg></button>
        <button aria-label="移动"><svg viewBox="0 0 20 20"><path class="w" d="M10 0l4 5H6zM10 20l4-5H6zM0 10l5-4v8zM20 10l-5-4v8zM9 4h2v12H9zM4 9h12v2H4z"/><path fill="#2f62b8" d="M7 7h6v6H7z"/></svg></button>
        <button aria-label="旋转"><svg viewBox="0 0 20 20"><path class="l" d="M14 3a8 8 0 1 1-8 0" stroke-width="2"/><path class="b" d="M6 3q4-3 8 0" stroke-width="3"/></svg></button>
        <button aria-label="缩放"><svg viewBox="0 0 20 20"><path class="f" d="M1 1h19v18h-8V8H1z"/><path class="w" d="M1 9h10v10H1z"/></svg></button>
        <button aria-label="拉伸"><svg viewBox="0 0 20 20"><path class="w" d="M1 1h8v18H1z"/><path class="f" d="M9 1h5l5 18H9z"/><path class="k" d="M5 13h5v-3l5 4-5 4v-3H5z"/></svg></button>
        <button aria-label="修剪"><svg viewBox="0 0 20 20"><path class="l" d="M0 10h6"/><path class="b" d="M5 18l7-16"/><path class="b t" d="M11 10h9" stroke-dasharray="2 1"/></svg></button>
        <button aria-label="延伸"><svg viewBox="0 0 20 20"><path class="l" d="M0 10h7"/><path class="b" d="M12 18l7-16"/><path class="b t" d="M8 10h7" stroke-dasharray="2 1"/></svg></button>
        <button aria-label="打断于点"><svg viewBox="0 0 20 20"><path class="w" d="M1 5h18v12H1z"/><path class="u" d="M14 3h4v4h-4z"/></svg></button>
        <button aria-label="打断"><svg viewBox="0 0 20 20"><path class="w" d="M1 4h18v13H1z"/><path class="u" d="M4 2h4v4H4zM12 2h4v4h-4z"/></svg></button>
        <button aria-label="合并"><svg viewBox="0 0 20 20"><path class="l" d="M1 10h18"/><path class="u" d="M6 6l5 4-5 4zM15 6l-5 4 5 4z"/></svg></button>
        <button aria-label="倒角"><svg viewBox="0 0 20 20"><path class="w" d="M1 19v-9L9 2h10v17z"/><path class="b" d="M0 8l7-7"/></svg></button>
        <button aria-label="圆角"><svg viewBox="0 0 20 20"><path class="w" d="M4 19Q4 5 19 4v15z"/><path class="b" d="M0 10Q1 1 10 1"/><path class="d" d="M2 12Q4 3 12 3"/></svg></button>
        <button aria-label="光顺曲线"><svg viewBox="0 0 20 20"><path class="l" d="M1 19l2-8M18 8l1-7"/><path class="b" d="M3 11q5-6 8 0t6-2"/><circle cx="3" cy="11" r="2.500" fill="#1f4a92"/><circle cx="17" cy="10" r="2.500" fill="#1f4a92"/></svg></button>
        <button aria-label="分解"><svg viewBox="0 0 20 20"><path class="w" d="M8 4l3-3h8l-3 3z"/><path class="f" d="M4 9h9v9H4z"/><path class="w" d="M4 8l3-3h9l-3 3zM14 9l4-3v7l-4 5z"/><path class="f" d="M0 11l3-3v7l-3 2z"/></svg></button>
      </div>
    </div>
    <div class="side right mini border-start border-dark"><div class="grip"></div><svg class="ms-2" viewBox="0 0 12 5"><path class="w" d="M0 1h12v3H0z"/></svg></div>
  </div>
</main>

<section class="cmd d-flex">
  <div class="cmdside d-flex flex-column align-items-center">
    <svg width="22" height="3"><path d="M0 1.500h22" stroke="#999" stroke-dasharray="1 2"/></svg>
    <button aria-label="关闭"><svg width="12" height="12"><path d="M1 1l10 10M11 1L1 11" stroke="#f2f2f2" stroke-width="2.500"/></svg></button>
    <button aria-label="自定义"><svg width="18" height="18"><path d="M7 7l9 9" stroke="#e6e6e6" stroke-width="4"/><path d="M6 0q5 2 4 7l-3 3Q2 11 0 6l4 1 3-3z" fill="#e6e6e6"/></svg></button>
  </div>
  <div class="flex-grow-1">
<pre class="hist"><span>命令</span>: '_id <span>指定点</span>:  X = 200.0000     Y = 200.0000     Z = 0.0000
<span>命令</span>: ID <span>指定点</span>:  X = 200.0000     Y = 200.0000     Z = 0.0000</pre>
    <div class="entry d-flex align-items-center">
      <button aria-label="最近使用的命令"><svg width="31" height="18"><path d="M.5.5h18v17H.5z" fill="#dfe3e8" stroke="#aab"/><path d="M4 5l5 4-5 4M10 13h5" fill="none" stroke="#5a6675" stroke-width="2"/><path d="M24 7h7l-3.500 4z" fill="#777"/></svg></button>
      <input type="text" placeholder="键入命令" aria-label="键入命令">
    </div>
  </div>
</section>

<div class="layouts d-flex">
  <button class="lay on">模型</button><button class="lay">布局1</button><button class="lay wide">布局2</button>
  <button class="lay add" aria-label="新建布局"><svg width="12" height="12"><path d="M6 1v10M1 6h10" stroke="#ccc" stroke-width="2"/></svg></button>
</div>

<footer class="status">
  <div class="strip d-flex align-items-center">
    <div class="coords h-100 d-flex align-items-center justify-content-center">199.6916, 196.7414, 0.0000</div><div class="vv"></div>
    <button class="model fw-bold">模型</button><div class="vv"></div>
    <button aria-label="栅格"><svg viewBox="0 0 22 22"><path class="n" d="M4 1v20M9 1v20M14 1v20M19 1v20M1 5h20M1 10h20M1 15h20" stroke-width="2.200"/></svg></button>
    <button aria-label="捕捉"><svg viewBox="0 0 22 22"><path class="l" d="M2 3h18M2 7h18M2 11h18M2 15h18M2 19h18" stroke-dasharray="1.500 2.500"/></svg></button>
    <button class="ar" aria-label="捕捉设置"><svg viewBox="0 0 9 6"><path fill="#fff" d="M0 0h9l-4.500 6z"/></svg></button><div class="vv"></div>
    <button aria-label="推断约束"><svg viewBox="0 0 22 22"><path class="l" d="M11 16V3h6v6h-6"/><path class="g" d="M7 14h6v7H7z"/></svg></button><div class="v"></div>
    <button aria-label="动态输入"><svg viewBox="0 0 22 22"><path class="l" d="M5 1v8M1 5h8"/><path class="g" d="M9 14h12v6H9z"/></svg></button><div class="v"></div>
    <button aria-label="正交"><svg viewBox="0 0 22 22"><path class="n" d="M4 2v18h17M4 13h7v7"/></svg></button>
    <button class="near" aria-label="极轴"><svg viewBox="0 0 22 22"><path class="l" d="M17 15A8 8 0 1 1 17 6M10 11h11M10 11V3q7 0 7 8"/></svg></button>
    <button class="ar" aria-label="极轴设置"><svg viewBox="0 0 9 6"><path fill="#fff" d="M0 0h9l-4.500 6z"/></svg></button>
    <button aria-label="等轴测草图"><svg viewBox="0 0 22 22"><path class="l" d="M2 1l17 19M12 1v20" opacity=".7"/></svg></button>
    <button class="ar" aria-label="等轴测设置"><svg viewBox="0 0 9 6"><path fill="#fff" d="M0 0h9l-4.500 6z"/></svg></button><div class="v"></div>
    <button aria-label="对象捕捉追踪"><svg viewBox="0 0 22 22"><path class="n" d="M20 2L3 19h18M9 9l5 4"/></svg></button>
    <button aria-label="对象捕捉"><svg viewBox="0 0 22 22"><path class="n" d="M4 5h15v15H4z"/><circle cx="4" cy="5" r="3.500" fill="#117a1c"/></svg></button>
    <button class="ar" aria-label="对象捕捉设置"><svg viewBox="0 0 9 6"><path fill="#fff" d="M0 0h9l-4.500 6z"/></svg></button><div class="v"></div>
    <button aria-label="线宽"><svg viewBox="0 0 22 22"><path class="g" d="M1 2h20v2H1zM1 7h12v3H1zM15 7h6v3h-6zM1 14h20v5H1z"/></svg></button><div class="v"></div>
    <button aria-label="透明度"><svg viewBox="0 0 22 22"><path fill="#2b7fe6" d="M2 2h18v18H2z"/><path d="M3 5l14 14M3 10l9 9M7 3l13 13M12 3l8 8M3 15l4 4M17 3L3 17M12 3L3 12M19 7L7 19M19 12l-7 7" stroke="#7ab4f5" stroke-width=".8"/></svg></button><div class="v"></div>
    <button class="near" aria-label="选择循环"><svg viewBox="0 0 22 22"><path class="l" d="M4 0v8M0 4h8M7 8h8"/><path fill="#8fb87c" d="M9 9h11v12H9z"/></svg></button><div class="v"></div>
    <button aria-label="三维对象捕捉"><svg viewBox="0 0 22 22"><path class="l" d="M3 6l8-4 9 4v9l-9 6-8-6zM3 6l8 5 9-5M11 11v10"/><circle cx="4" cy="5" r="3.500" fill="#117a1c"/></svg></button>
    <button class="ar" aria-label="三维捕捉设置"><svg viewBox="0 0 9 6"><path fill="#fff" d="M0 0h9l-4.500 6z"/></svg></button><div class="vv"></div>
    <button aria-label="动态UCS"><svg viewBox="0 0 22 22"><path class="n" d="M3 2v18h18M3 20L15 9M1 5l2-3 2 3M18 18l3 2-3 2"/><path fill="#2b8cf5" d="M17 2l-6 8h4l-1 5 6-8h-4z"/></svg></button>
    <button aria-label="选择过滤"><svg viewBox="0 0 22 22"><path class="l" d="M2 6l9-4 9 4v10l-9 5-9-5zM2 6l9 5 9-5M11 11v10" opacity=".8" stroke-dasharray="5 1"/></svg></button>
    <button class="ar" aria-label="过滤设置"><svg viewBox="0 0 9 6"><path fill="#fff" d="M0 0h9l-4.500 6z"/></svg></button>
    <button aria-label="小控件"><svg viewBox="0 0 22 22"><path class="l" d="M4 15V6l7-5 7 5v9l-7 5z" opacity=".7"/><path d="M11 3v9" stroke="#3f86dd" stroke-width="2"/><path d="M13 13l7 6M20 14v6h-5" stroke="#a83a2f" stroke-width="1.600" fill="none"/><path d="M9 13l-7 6h5M2 15v4" stroke="#3d8a38" stroke-width="1.600" fill="none"/></svg></button>
    <button class="ar" aria-label="小控件设置"><svg viewBox="0 0 9 6"><path fill="#fff" d="M0 0h9l-4.500 6z"/></svg></button><div class="vv"></div>
    <button aria-label="注释可见性"><svg viewBox="0 0 22 22"><path fill="#2b8cf5" d="M8 3l3-2 2 3v7l8 9h-6l-4-4-4 4H1l7-9z"/><circle class="n" cx="17" cy="5" r="3.500"/></svg></button>
    <button class="near" aria-label="自动缩放"><svg viewBox="0 0 22 22"><path class="g" d="M8 3l3-2 2 3v7l8 9h-6l-4-4-4 4H1l7-9z"/><path class="w" d="M19 1l-5 6h3l-1 4 5-6h-3z"/></svg></button>
    <button class="near" aria-label="注释比例"><svg viewBox="0 0 22 22"><path class="g" d="M11 1l3 6v5l7 8h-6l-4-3-4 3H1l7-8V7z"/></svg></button>
    <button class="txt ms-1 gap-1">1:1 / 100%<svg viewBox="0 0 9 6"><path fill="#fff" d="M0 0h9l-4.500 6z"/></svg></button><div class="vv ms-2"></div>
    <button aria-label="工作空间"><svg viewBox="0 0 22 22"><circle cx="11" cy="11" r="5" fill="none" stroke="#ccc" stroke-width="4.500"/><circle cx="11" cy="11" r="7.500" fill="none" stroke="#ccc" stroke-width="2.500" stroke-dasharray="3.200 2.700"/></svg></button>
    <button class="ar" aria-label="工作空间设置"><svg viewBox="0 0 9 6"><path fill="#fff" d="M0 0h9l-4.500 6z"/></svg></button><div class="v"></div>
    <button aria-label="注释监视器"><svg viewBox="0 0 22 22"><path d="M11 2v18M2 11h18" stroke="#ccc" stroke-width="3"/></svg></button><div class="vv"></div>
    <button aria-label="单位"><svg viewBox="0 0 22 22"><path class="g" d="M8 1h7v20H8z"/><path d="M12 5h3M11 10h4M12 15h3" stroke="#555"/></svg></button>
    <div class="units"><select aria-label="单位"><option>小数</option></select></div><div class="v"></div>
    <button aria-label="快捷特性"><svg viewBox="0 0 22 22"><path class="l" d="M6 3h11v16H6zM9 8h6M9 11h6M9 14h6"/></svg></button><div class="vv"></div>
    <button aria-label="锁定界面"><svg viewBox="0 0 22 22"><path class="l" d="M1 3v12h8M14 12V9q0-3 4-3t4 4"/><path class="g" d="M9 12h10v8H9z"/></svg></button>
    <button class="ar" aria-label="锁定设置"><svg viewBox="0 0 9 6"><path fill="#fff" d="M0 0h9l-4.500 6z"/></svg></button><div class="v"></div>
    <button aria-label="隔离对象"><svg viewBox="0 0 22 22"><path class="l" d="M2 4h10v6H2zM6 20l5-8 5 8z"/><circle class="l" cx="17" cy="9" r="4"/></svg></button><div class="vv"></div>
    <button aria-label="图形性能"><svg viewBox="0 0 22 22"><circle cx="11" cy="10" r="10.500" fill="#0f6fd6"/><path d="M7 10l4 4 6-8" fill="none" stroke="#0a3f86" stroke-width="2"/></svg></button><div class="vv"></div>
    <button class="near" aria-label="硬件加速"><svg viewBox="0 0 22 22"><path fill="#f1d545" d="M1 5h14v10H1z"/><path class="u" d="M3 13h9v5H3z"/><path d="M10 14l4 4 7-9" fill="none" stroke="#54b32c" stroke-width="3"/></svg></button>
    <button class="near" aria-label="关联监视"><svg viewBox="0 0 22 22"><path class="w" d="M0 2h21v17H0z"/><path d="M2 17Q6 5 9 5t8 12" class="d"/><path d="M18 12l5 9H13z" fill="#e8641c"/></svg></button><div class="v"></div>
    <button class="ms-auto" aria-label="全屏显示"><svg viewBox="0 0 22 22"><path class="l" d="M1 3h20v15H1zM5 14l4-3M5 10v4h4M17 7l-4 3M17 11V7h-4"/></svg></button>
    <button aria-label="自定义"><svg viewBox="0 0 22 22"><path d="M1 4h20M1 11h20M1 18h20" stroke="#ccc" stroke-width="2.500"/></svg></button>
  </div>
</footer>
<div class="floor"></div>

<aside class="brand d-flex align-items-center">
  <svg width="66" height="68" viewBox="0 0 66 68" fill="none" stroke="#cfd0d2" stroke-width="6" stroke-linecap="round"><path d="M22 50q-6 4-6-4V9q0-6 6-6 3 0 6 2L56 23q10 9 0 18L28 61Q12 70 5 56V18" stroke-linejoin="round"/><path d="M25 26v14l12-7z" fill="#cfd0d2" stroke="none"/><path d="M43 27v12" stroke-width="2.500"/></svg>
  <div>
    <div class="cn d-flex"><span>溜</span><span>溜</span><span>自</span><span>学</span></div>
    <div class="en">zixue.3D66.COM</div>
  </div>
</aside>

<script>
// Drawing grid: a minor line every fifth of a major step, majors slightly brighter.
const grid = document.getElementById('grid'), major = 133.1, minor = major / 5;
const lines = (origin, end, vertical) => {
  for (let i = -Math.floor(origin / minor), p; (p = origin + i * minor) < end; i++) {
    const r = document.createElementNS('http://www.w3.org/2000/svg', 'rect'), at = Math.round(p);
    r.setAttribute(vertical ? 'x' : 'y', at);
    r.setAttribute('width', vertical ? 1 : '100%');
    r.setAttribute('height', vertical ? '100%' : 1);
    r.setAttribute('fill', i % 5 ? '#141416' : '#2a2b30');
    i % 5 ? grid.prepend(r) : grid.append(r);
  }
};
lines(66, screen.width + 800, true);
lines(33, screen.height + 800, false);
</script>
</body>
</html>
